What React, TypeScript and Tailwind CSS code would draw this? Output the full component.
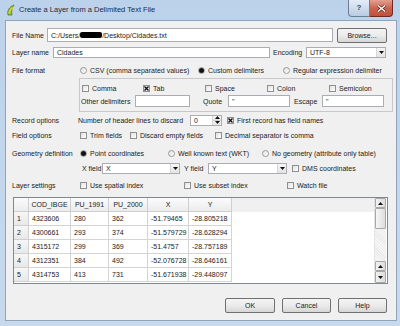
import React from 'react';

const rows = [
  ['4323606', '280', '362', '-51.79465', '-28.805218'],
  ['4300661', '293', '374', '-51.579729', '-28.628294'],
  ['4315172', '299', '369', '-51.4757', '-28.757189'],
  ['4312351', '384', '492', '-52.076728', '-28.646161'],
  ['4314753', '413', '731', '-51.671938', '-29.448097'],
];
const cols = [
  { name: 'COD_IBGE', w: 42 },
  { name: 'PU_1991', w: 38 },
  { name: 'PU_2000', w: 39 },
  { name: 'X', w: 41 },
  { name: 'Y', w: 43 },
];

function Check({ checked }: { checked?: boolean }) {
  return (
    <span className="w-[7px] h-[7px] shrink-0 border border-[#8e8f8f] bg-linear-to-br from-[#e2e2e2] to-white flex items-center justify-center">
      {checked && (
        <svg width="5" height="5" viewBox="0 0 5 5">
          <path d="M0.5 0.5 L4.5 4.5 M4.5 0.5 L0.5 4.5" stroke="#111" strokeWidth="1.4" />
        </svg>
      )}
    </span>
  );
}

function Radio({ checked }: { checked?: boolean }) {
  return (
    <span className="w-[7px] h-[7px] shrink-0 rounded-full border border-[#9a9a9a] bg-linear-to-br from-[#e0e0e0] to-white flex items-center justify-center">
      {checked && <span className="w-[5px] h-[5px] rounded-full bg-[#111]" />}
    </span>
  );
}

function Opt({ label, checked, radio, w }: { label: string; checked?: boolean; radio?: boolean; w?: number }) {
  return (
    <div className="flex items-center gap-[3px] shrink-0" style={w ? { width: w } : undefined}>
      {radio ? <Radio checked={checked} /> : <Check checked={checked} />}
      <span className="whitespace-nowrap">{label}</span>
    </div>
  );
}

function Arrow({ down }: { down?: boolean }) {
  return (
    <svg width="5" height="3" viewBox="0 0 5 3">
      <path d={down ? 'M0 0 H5 L2.5 3 Z' : 'M0 3 H5 L2.5 0 Z'} fill="#111" />
    </svg>
  );
}

function Combo({ w, value }: { w: number; value: string }) {
  return (
    <div className="h-[11px] border border-[#abadb3] bg-white flex items-center shrink-0" style={{ width: w }}>
      <span className="flex-1 pl-[3px]">{value}</span>
      <span className="w-[9px] h-full border-l border-[#d6d6d6] bg-linear-to-b from-[#f6f6f6] to-[#e4e4e4] flex items-center justify-center">
        <Arrow down />
      </span>
    </div>
  );
}

function Field({ w, children }: { w: number; children?: React.ReactNode }) {
  return (
    <div className="h-[12px] border border-[#abadb3] bg-white flex items-center pl-[3px] shrink-0" style={{ width: w }}>
      {children}
    </div>
  );
}

function Btn({ label, w }: { label: string; w: number }) {
  return (
    <div
      className="h-[15px] rounded-[2px] border border-[#707070] bg-linear-to-b from-[#f4f4f4] via-[#ebebeb] to-[#d6d6d6] flex items-center justify-center shrink-0"
      style={{ width: w }}
    >
      {label}
    </div>
  );
}

function Scroll() {
  const arrowBtn = 'h-[10px] border border-[#a8a8a8] rounded-[1px] bg-linear-to-r from-[#f2f2f2] to-[#dcdcdc] flex items-center justify-center';
  return (
    <div className="w-[12px] flex flex-col bg-[#f3f3f3] border-l border-[#e4e4e4] mr-[1px]">
      <div className={arrowBtn}><Arrow /></div>
      <div className="h-[21px] border border-[#a8a8a8] rounded-[1px] bg-linear-to-r from-[#f6f6f6] to-[#dedede]" />
      <div className="flex-1 bg-[repeating-linear-gradient(45deg,#f6f6f6_0px,#f6f6f6_1px,#ebebeb_1px,#ebebeb_2px)]" />
      <div className={arrowBtn}><Arrow /></div>
      <div className={arrowBtn + ' h-[12px]'}><Arrow down /></div>
    </div>
  );
}

export default function App() {
  return (
    <div className="w-[400px] h-[326px] overflow-hidden flex flex-col bg-linear-to-b from-[#bcd2eb] to-[#c8d9ec] font-['Liberation_Sans',Arial,sans-serif] text-[7px] leading-none text-[#1b1b1b] whitespace-nowrap">
      {/* Title bar */}
      <div className="h-[20px] flex items-start shrink-0">
        <svg width="10" height="12" viewBox="0 0 10 12" className="ml-[6px] mt-[4px]">
          <path d="M2 11 C1 7 3 3 8 1 C6 4 5 7 6 11 Z" fill="#9bc33a" stroke="#4f7a16" strokeWidth="0.8" />
          <path d="M3 9 C4 6 6 4 8 3" stroke="#f0d43a" strokeWidth="1.2" fill="none" />
        </svg>
        <span className="ml-[3px] mt-[6px] text-[7.5px] text-[#1e2a3a]">Create a Layer from a Delimited Text File</span>
        <div className="ml-auto mr-[7px] flex">
          <div className="w-[22px] h-[17px] rounded-bl-[4px] border border-[#6d7f97] border-t-0 bg-linear-to-b from-[#e4edf7] to-[#b9cce2] flex items-center justify-center text-[8px] text-[#34435a] font-bold">
            ?
          </div>
          <div className="w-[23px] h-[17px] rounded-br-[4px] border border-[#6a2b24] border-t-0 border-l-0 bg-linear-to-b from-[#e3a092] via-[#cc6450] to-[#c0503b] flex items-center justify-center">
            <svg width="9" height="7" viewBox="0 0 9 7">
              <path d="M1 0.5 L8 6.5 M8 0.5 L1 6.5" stroke="#3c1510" strokeWidth="2.6" />
              <path d="M1 0.5 L8 6.5 M8 0.5 L1 6.5" stroke="#fff" strokeWidth="1.5" />
            </svg>
          </div>
        </div>
      </div>

      {/* Client area */}
      <div className="ml-[5px] mr-[3px] h-[301px] border border-[#8ea3bd] bg-[#f0f0f0] flex flex-col pl-[6px]">
        {/* File name */}
        <div className="mt-[6px] h-[16px] flex items-center">
          <span className="w-[35px] shrink-0">File Name</span>
          <div className="w-[286px] h-[14px] border border-[#abadb3] bg-white flex items-center pl-[3px]">
            C:/Users/<span className="inline-block w-[22px] h-[6px] bg-black rounded-[2px]" />/Desktop/Cidades.txt
          </div>
          <div className="ml-[4px]"><Btn label="Browse..." w={50} /></div>
        </div>

        {/* Layer name */}
        <div className="mt-[4px] h-[11px] flex items-center">
          <span className="w-[41px] shrink-0">Layer name</span>
          <div className="w-[217px] h-[11px] border border-[#abadb3] bg-white flex items-center pl-[3px]">Cidades</div>
          <span className="ml-[3px] w-[33px]">Encoding</span>
          <Combo w={80} value="UTF-8" />
        </div>

        {/* File format */}
        <div className="mt-[7px] h-[10px] flex items-center">
          <span className="w-[68px] shrink-0">File format</span>
          <Opt radio label="CSV (comma separated values)" w={118} />
          <Opt radio checked label="Custom delimiters" w={85} />
          <Opt radio label="Regular expression delimiter" />
        </div>

        {/* Delimiters box */}
        <div className="mt-[3px] ml-[67px] w-[314px] h-[34px] border border-[#c8c8c8] flex flex-col pt-[4px] pl-[2px]">
          <div className="h-[10px] flex items-center">
            <Opt label="Comma" w={61} />
            <Opt label="Tab" checked w={62} />
            <Opt label="Space" w={62} />
            <Opt label="Colon" w={62} />
            <Opt label="Semicolon" />
          </div>
          <div className="mt-[2px] h-[12px] flex items-center">
            <span className="w-[54px] shrink-0 -ml-[1px]">Other delimiters</span>
            <Field w={55} />
            <span className="ml-[13px] w-[25px]">Quote</span>
            <Field w={62}>"</Field>
            <span className="ml-[4px] w-[28px]">Escape</span>
            <Field w={62}>"</Field>
          </div>
        </div>

        {/* Record options */}
        <div className="mt-[3px] h-[10px] flex items-center">
          <span className="w-[66px] shrink-0">Record options</span>
          <span className="w-[112px] shrink-0">Number of header lines to discard</span>
          <div className="w-[32px] h-[11px] border border-[#abadb3] bg-white flex">
            <span className="flex-1 pl-[3px] flex items-center">0</span>
            <span className="w-[9px] flex flex-col border-l border-[#d6d6d6]">
              <span className="flex-1 flex items-center justify-center bg-linear-to-b from-[#f6f6f6] to-[#e6e6e6] border-b border-[#d0d0d0]"><Arrow /></span>
              <span className="flex-1 flex items-center justify-center bg-linear-to-b from-[#f6f6f6] to-[#e6e6e6]"><Arrow down /></span>
            </span>
          </div>
          <div className="ml-[5px]"><Opt label="First record has field names" checked /></div>
        </div>

        {/* Field options */}
        <div className="mt-[5px] h-[10px] flex items-center">
          <span className="w-[68px] shrink-0">Field options</span>
          <Opt label="Trim fields" w={50} />
          <Opt label="Discard empty fields" w={85} />
          <Opt label="Decimal separator is comma" />
        </div>

        {/* Geometry definition */}
        <div className="mt-[8px] h-[10px] flex items-center">
          <span className="w-[68px] shrink-0">Geometry definition</span>
          <Opt radio checked label="Point coordinates" w={88} />
          <Opt radio label="Well known text (WKT)" w={94} />
          <Opt radio label="No geometry (attribute only table)" />
        </div>

        {/* X / Y fields */}
        <div className="mt-[5px] h-[11px] flex items-center">
          <span className="w-[70px] shrink-0" />
          <span className="w-[20px] shrink-0">X field</span>
          <Combo w={78} value="X" />
          <span className="ml-[4px] w-[24px] shrink-0">Y field</span>
          <Combo w={79} value="Y" />
          <div className="ml-[5px]"><Opt label="DMS coordinates" /></div>
        </div>

        {/* Layer settings */}
        <div className="mt-[6px] h-[10px] flex items-center">
          <span className="w-[68px] shrink-0">Layer settings</span>
          <Opt label="Use spatial index" w={104} />
          <Opt label="Use subset index" w={103} />
          <Opt label="Watch file" />
        </div>

        {/* Sample table */}
        <div className="mt-[7px] ml-[1px] w-[375px] h-[87px] border border-[#828790] bg-white flex">
          <div className="flex-1 flex flex-col">
            <div className="h-[14px] flex bg-[#f0f0f0]">
              <div className="w-[15px] border-r border-b border-[#cfcfcf] bg-linear-to-b from-[#fbfbfb] to-[#ececec]" />
              {cols.map(c => (
                <div
                  key={c.name}
                  className="border-r border-b border-[#cfcfcf] bg-linear-to-b from-[#fbfbfb] to-[#ececec] flex items-center justify-center"
                  style={{ width: c.w }}
                >
                  {c.name}
                </div>
              ))}
            </div>
            {rows.map((r, i) => (
              <div key={i} className="h-[14px] flex">
                <div className="w-[15px] border-r border-b border-[#cfcfcf] bg-linear-to-b from-[#f7f7f7] to-[#e8e8e8] flex items-center pl-[3px]">
                  {i + 1}
                </div>
                {r.map((v, j) => (
                  <div
                    key={j}
                    className="border-r border-b border-[#d4d4d4] flex items-center pl-[3px]"
                    style={{ width: cols[j].w }}
                  >
                    {v}
                  </div>
                ))}
              </div>
            ))}
          </div>
          <Scroll />
        </div>

        {/* Buttons */}
        <div className="mt-[14px] flex justify-end pr-[9px] gap-[7px]">
          <Btn label="OK" w={50} />
          <Btn label="Cancel" w={49} />
          <Btn label="Help" w={49} />
        </div>
      </div>
    </div>
  );
}
